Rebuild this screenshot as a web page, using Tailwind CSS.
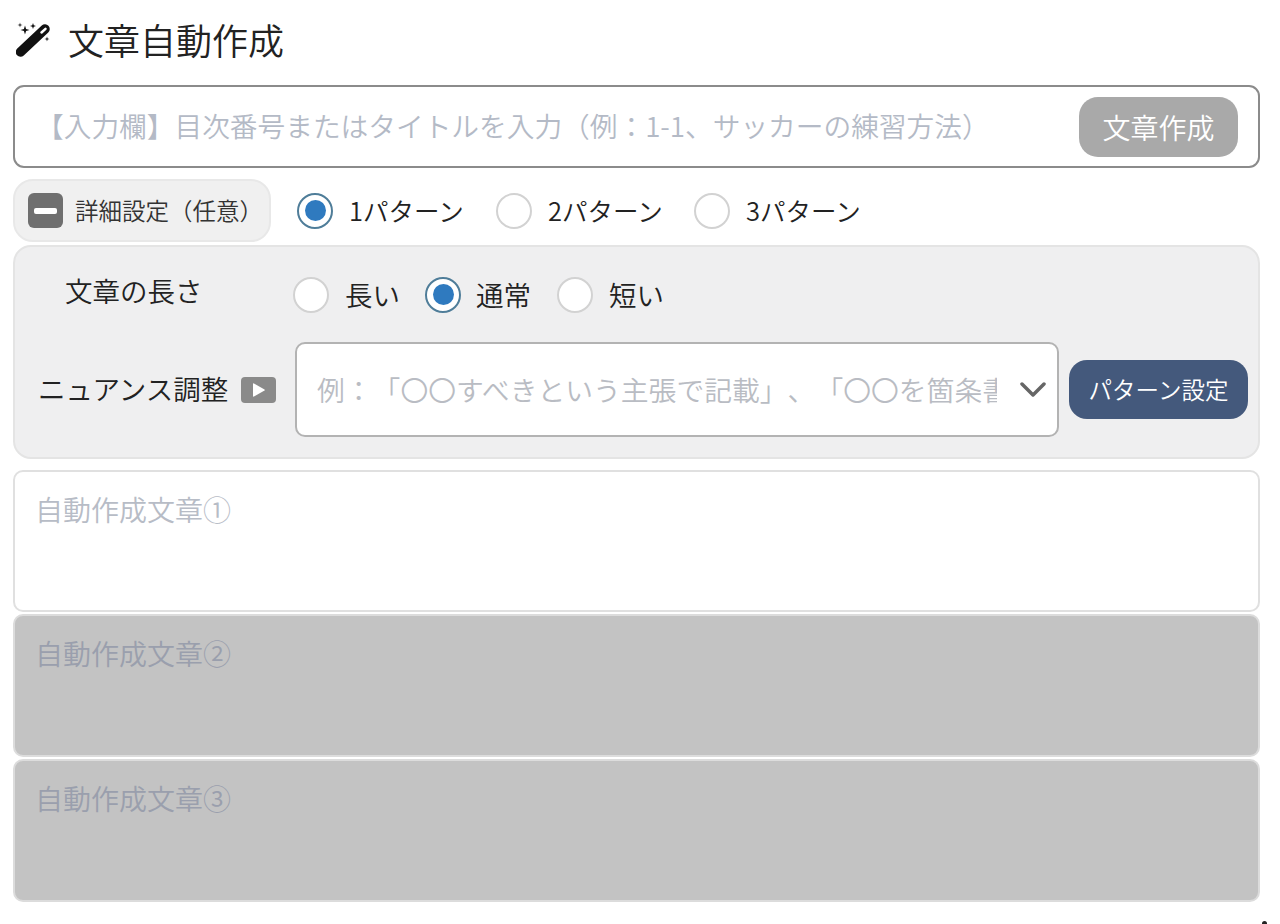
<!DOCTYPE html>
<html lang="ja">
<head>
  <meta charset="UTF-8" />
  <meta name="viewport" content="width=device-width, initial-scale=1.0" />
  <title>文章自動作成</title>
  <script src="https://cdn.jsdelivr.net/npm/@tailwindcss/browser@4"></script>
</head>
<body class="bg-white font-['Noto_Sans_CJK_JP','Noto_Sans',sans-serif] font-[350] text-[#222] [text-spacing-trim:space-all]">
  <div class="relative h-[924px] overflow-hidden px-[13px] pr-[20px]">
    <!-- title -->
    <div class="flex h-[85px] items-center pb-[7px] pl-[3px]">
      <svg class="h-[36px] w-[36px]" viewBox="0 0 36 36" fill="#111">
        <path d="M4.500 31 L29 8" fill="none" stroke="#111" stroke-width="9.500" stroke-linecap="round" />
        <path d="M25.500 11.500 L29.500 7.800" fill="none" stroke="#fff" stroke-width="2.500" stroke-linecap="round" />
        <path d="M9 4.500 L10.100 8 L13.500 9 L10.100 10 L9 13.500 L7.900 10 L4.500 9 L7.900 8 Z M17 2 L17.800 4.200 L20 5 L17.800 5.800 L17 8 L16.200 5.800 L14 5 L16.200 4.200 Z M4 1.500 L4.500 3.500 L6.500 4 L4.500 4.500 L4 6.500 L3.500 4.500 L1.500 4 L3.500 3.500 Z M31 15.500 L31.600 17.400 L33.500 18 L31.600 18.600 L31 20.500 L30.400 18.600 L28.500 18 L30.400 17.400 Z" />
      </svg>
      <h1 class="ml-[16px] text-[36px] leading-none font-[350]">文章自動作成</h1>
    </div>

    <!-- main input -->
    <div class="flex h-[83px] items-center rounded-[11px] border-2 border-[#8b8b8b] pr-[20px] pl-[21px]">
      <input class="min-w-0 flex-1 bg-transparent pb-[2px] text-[27.700px] outline-none placeholder:text-[#b4bac6]" placeholder="【入力欄】目次番号またはタイトルを入力（例：1-1、サッカーの練習方法）" />
      <button class="h-[60px] w-[159px] shrink-0 rounded-[19px] bg-[#a9a9a9] text-[28px] text-white">文章作成</button>
    </div>

    <!-- detail toggle and patterns -->
    <div class="mt-[11px] flex h-[63px] items-center">
      <div class="flex h-full w-[258px] items-center rounded-[20px] border-2 border-[#e8e8e8] bg-[#f0f0f0] pl-[13px]">
        <span class="flex h-[35px] w-[35px] items-center justify-center rounded-[6px] bg-[#6f6f6f]">
          <span class="h-[6px] w-[23px] rounded-[2px] bg-white"></span>
        </span>
        <span class="ml-[12px] text-[23.500px] whitespace-nowrap text-[#333]">詳細設定（任意）</span>
      </div>
      <div class="ml-[26px] flex items-center text-[25.500px]">
        <span class="flex h-[36px] w-[36px] items-center justify-center rounded-full border-2 border-[#4f7d99] bg-white"><span class="h-[21px] w-[21px] rounded-full bg-[#2f7abf]"></span></span>
        <span class="ml-[16px] w-[147px]">1パターン</span>
        <span class="h-[36px] w-[36px] rounded-full border-2 border-[#d2d2d2] bg-white"></span>
        <span class="ml-[16px] w-[146px]">2パターン</span>
        <span class="h-[36px] w-[36px] rounded-full border-2 border-[#d2d2d2] bg-white"></span>
        <span class="ml-[16px]">3パターン</span>
      </div>
    </div>

    <!-- detail panel -->
    <div class="mt-[3px] h-[214px] rounded-[18px] border-2 border-[#e4e4e4] bg-[#efeff0]">
      <div class="flex h-[95px] items-center">
        <span class="ml-[50px] w-[228px] pb-[8px] text-[27.500px] whitespace-nowrap">文章の長さ</span>
        <div class="flex items-center text-[27.500px]">
          <span class="h-[36px] w-[36px] rounded-full border-2 border-[#d2d2d2] bg-white"></span>
          <span class="ml-[16px] w-[80px]">長い</span>
          <span class="flex h-[36px] w-[36px] items-center justify-center rounded-full border-2 border-[#4f7d99] bg-white"><span class="h-[21px] w-[21px] rounded-full bg-[#2f7abf]"></span></span>
          <span class="ml-[15px] w-[81px]">通常</span>
          <span class="h-[36px] w-[36px] rounded-full border-2 border-[#d2d2d2] bg-white"></span>
          <span class="ml-[16px]">短い</span>
        </div>
      </div>
      <div class="flex h-[95px] items-center">
        <span class="ml-[23px] w-[203px] pb-[2px] text-[27.500px] whitespace-nowrap">ニュアンス調整</span>
        <span class="flex h-[26px] w-[35px] items-center justify-center rounded-[4px] bg-[#8a8a8a]">
          <svg class="h-[14px] w-[12px]" viewBox="0 0 12 14" fill="#fff"><path d="M0 1 Q0 0 1 0.500 L11.500 6.500 Q12 7 11.500 7.500 L1 13.500 Q0 14 0 13 Z" /></svg>
        </span>
        <div class="ml-[19px] flex h-[95px] w-[764px] shrink-0 items-center overflow-hidden rounded-[10px] border-2 border-[#b3b3b3] bg-white pl-[20px]">
          <span class="w-[680px] shrink-0 overflow-hidden text-[27.800px] whitespace-nowrap text-[#b9bcc3]">例：「〇〇すべきという主張で記載」、「〇〇を箇条書</span>
          <svg class="ml-[23px] h-[16px] w-[26px] shrink-0" viewBox="0 0 26 16" fill="none" stroke="#666" stroke-width="3.500" stroke-linecap="round" stroke-linejoin="round"><path d="M2 2 L13 13 L24 2" /></svg>
        </div>
        <button class="ml-[10px] h-[59px] w-[179px] shrink-0 rounded-[18px] bg-[#44597c] text-[23.500px] text-white">パターン設定</button>
      </div>
    </div>

    <!-- generated texts -->
    <div class="mt-[11px] flex flex-col gap-[2px]">
      <div class="h-[142px] rounded-[10px] border-2 border-[#e0e0e0] bg-white pt-[17px] pl-[20px] text-[28px] leading-[40px] text-[#b7bcc6]">自動作成文章①</div>
      <div class="h-[143px] rounded-[10px] border-2 border-[#dcdcdc] bg-[#c3c3c3] pt-[17px] pl-[20px] text-[28px] leading-[40px] text-[#9a9fad]">自動作成文章②</div>
      <div class="h-[143px] rounded-[10px] border-2 border-[#dcdcdc] bg-[#c3c3c3] pt-[17px] pl-[20px] text-[28px] leading-[40px] text-[#9a9fad]">自動作成文章③</div>
    </div>

    <span class="absolute top-[921px] left-[1262px] h-[4px] w-[5px] rounded-t-full bg-[#222]"></span>
  </div>
</body>
</html>
